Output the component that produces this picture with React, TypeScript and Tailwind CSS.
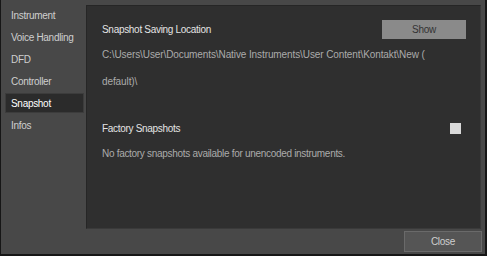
import React from "react";

const items = ["Instrument", "Voice Handling", "DFD", "Controller", "Snapshot", "Infos"];

export default function App() {
  const active = "Snapshot";

  return (
    <div
      className="w-[487px] h-[256px] bg-[#484848] border-l border-r-2 border-b-2 border-[#161616] flex flex-col text-[10px] tracking-[-0.3px]"
      style={{ fontFamily: '"Liberation Sans", Arial, sans-serif' }}
    >
      <div className="flex flex-1 pt-[4px] pr-[4px]">
        {/* Sidebar */}
        <ul className="w-[85px] pl-[4px] pr-[2px] flex flex-col">
          {items.map((item) => (
            <li key={item} className="h-[22px] flex">
              {item === active ? (
                <div className="flex-1 my-[1px] bg-[#2b2b2b] border border-[#3c3c3c] flex items-center pl-[5px] text-white">
                  {item}
                </div>
              ) : (
                <div className="flex-1 flex items-center pl-[6px] text-[#cfcfcf]">{item}</div>
              )}
            </li>
          ))}
        </ul>

        {/* Panel */}
        <div className="flex-1 mt-[1px] h-[224px] bg-[#2f2f2f] border border-[#262626] border-r-[#3a3a3a] border-b-[#3a3a3a] pl-[15px] pr-[14px] pt-[14px]">
          <div className="flex items-center justify-between h-[19px]">
            <span className="text-[#e4e4e4]">Snapshot Saving Location</span>
            <button className="w-[84px] h-[19px] bg-[#8a8a8a] text-[#333] flex items-center justify-center">
              Show
            </button>
          </div>
          <p className="mt-[2px] leading-[27px] text-[#ababab] tracking-[-0.1px]">
            C:\Users\User\Documents\Native Instruments\User Content\Kontakt\New (
            <br />
            default)\
          </p>
          <div className="mt-[27px] flex items-center justify-between h-[12px] pr-[5px]">
            <span className="text-[#e4e4e4]">Factory Snapshots</span>
            <span className="w-[11px] h-[11px] bg-[#d9d9d9]" />
          </div>
          <p className="mt-[13px] leading-[14px] text-[#ababab]">
            No factory snapshots available for unencoded instruments.
          </p>
        </div>
      </div>

      {/* Footer */}
      <div className="h-[25px] flex justify-end items-start pr-[3px] pt-[2px]">
        <button className="w-[78px] h-[21px] bg-[#555555] border border-[#6a6a6a] text-[#cfcfcf] flex items-center justify-center">
          Close
        </button>
      </div>
    </div>
  );
}
